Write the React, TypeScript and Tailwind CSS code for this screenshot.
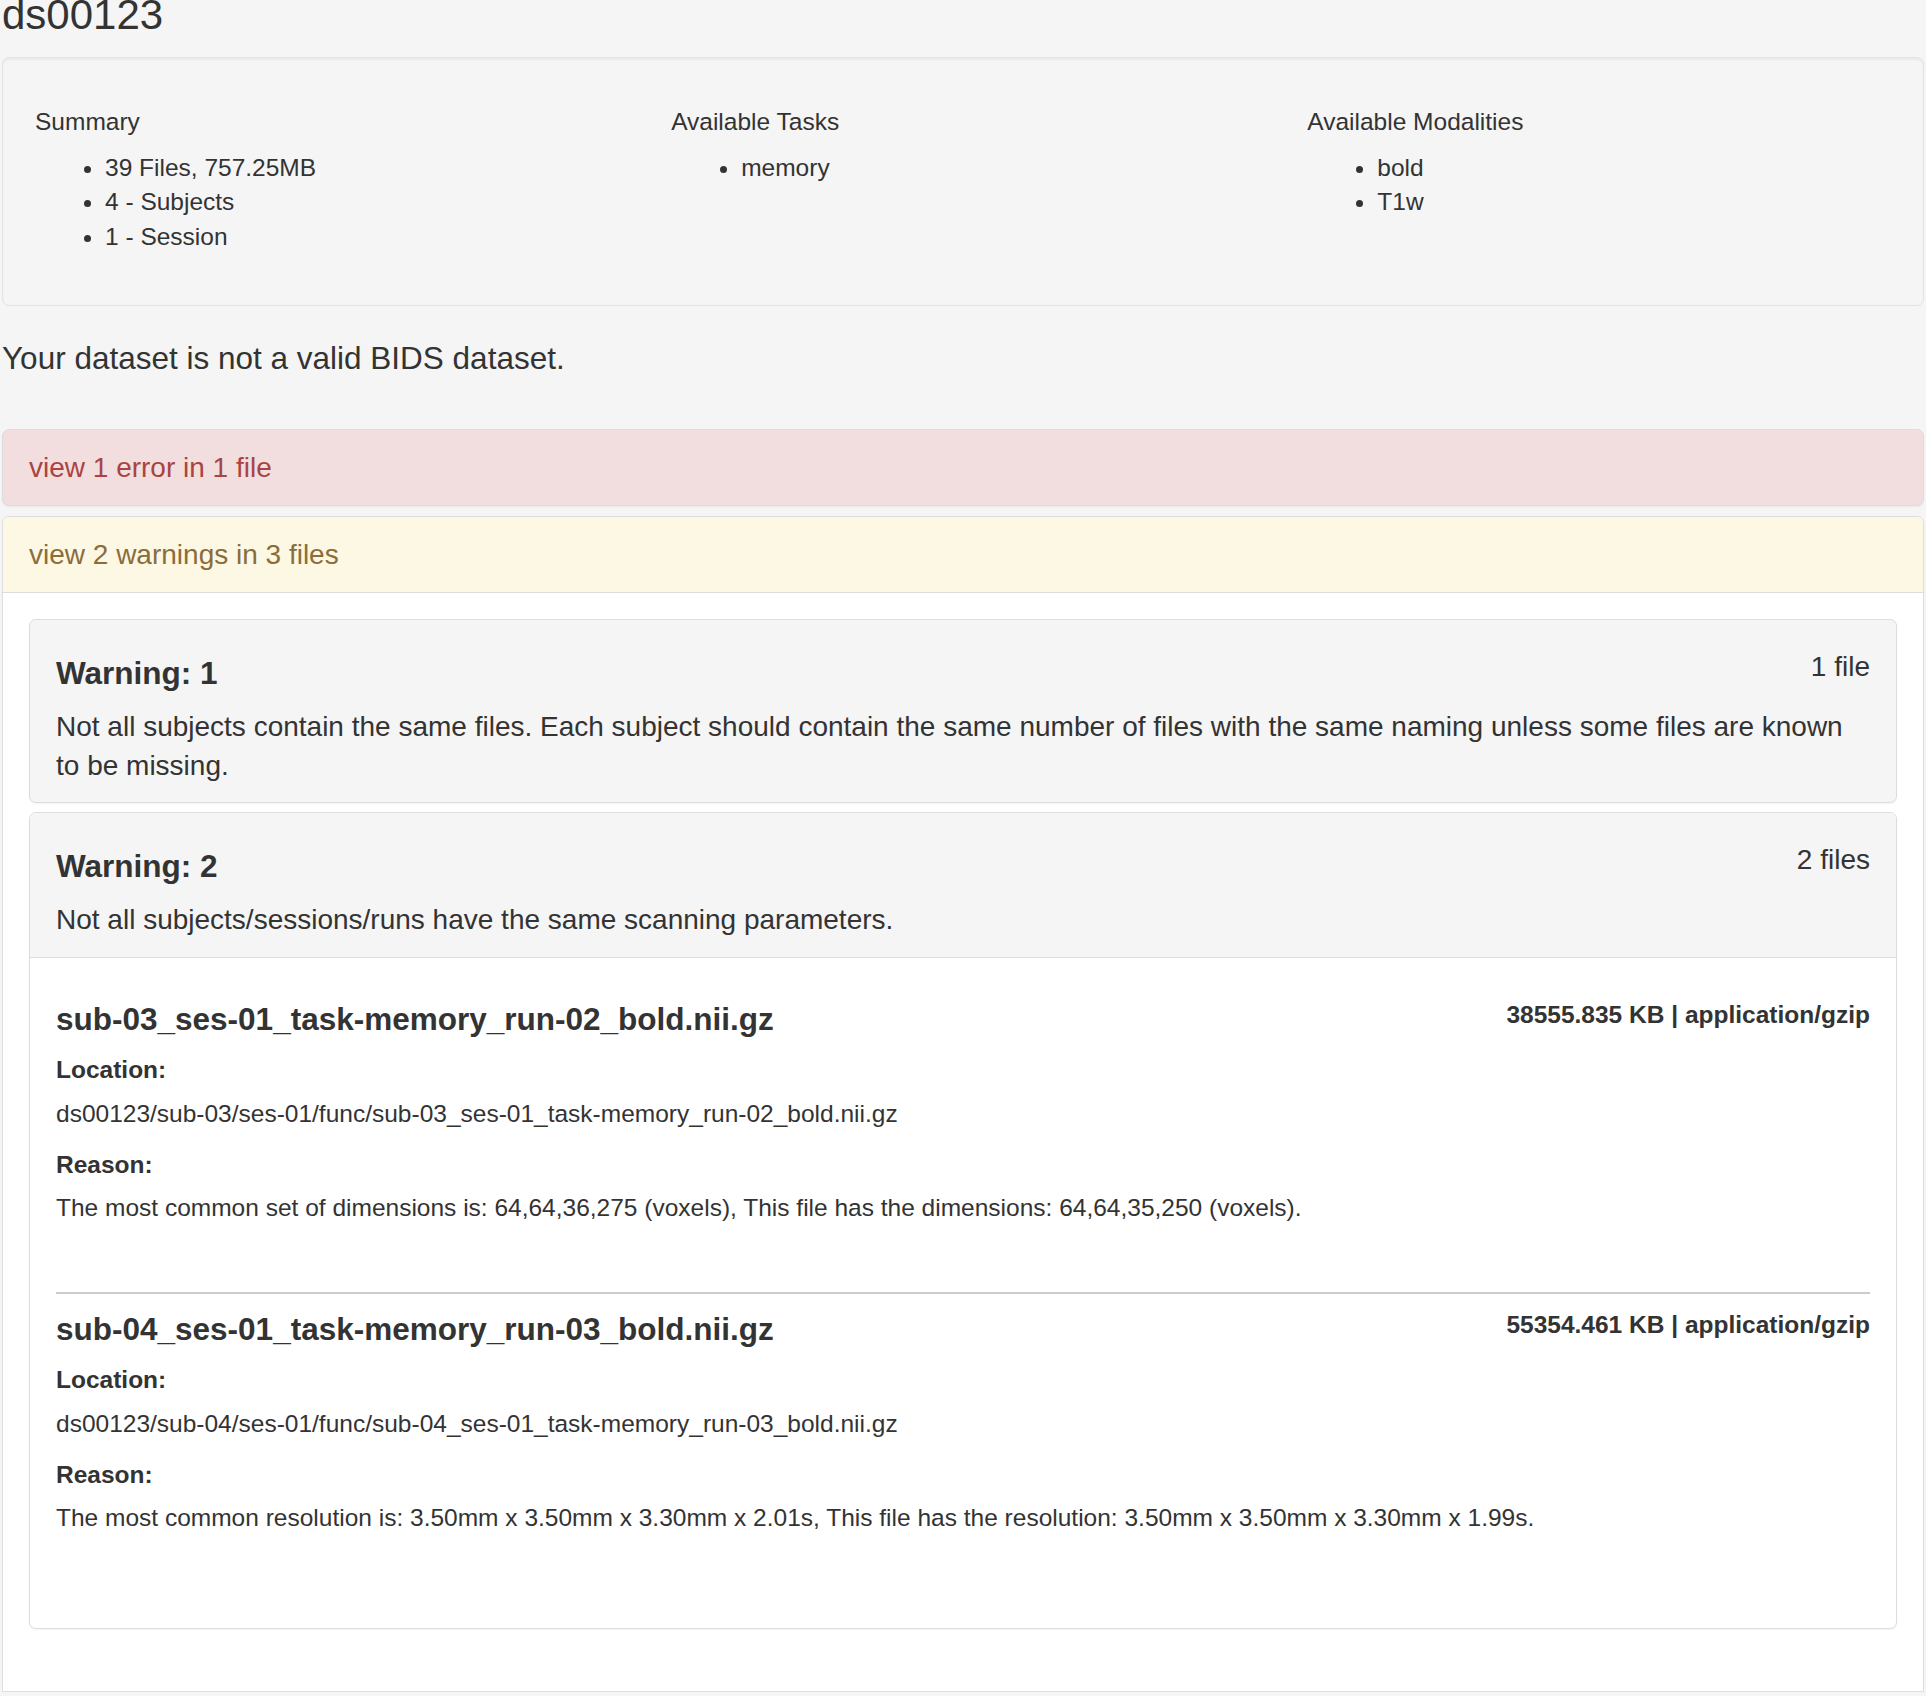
import React from "react"

const summary = ["39 Files, 757.25MB", "4 - Subjects", "1 - Session"]
const tasks = ["memory"]
const modalities = ["bold", "T1w"]

const files = [
  {
    name: "sub-03_ses-01_task-memory_run-02_bold.nii.gz",
    meta: "38555.835 KB | application/gzip",
    location: "ds00123/sub-03/ses-01/func/sub-03_ses-01_task-memory_run-02_bold.nii.gz",
    reason:
      "The most common set of dimensions is: 64,64,36,275 (voxels), This file has the dimensions: 64,64,35,250 (voxels).",
  },
  {
    name: "sub-04_ses-01_task-memory_run-03_bold.nii.gz",
    meta: "55354.461 KB | application/gzip",
    location: "ds00123/sub-04/ses-01/func/sub-04_ses-01_task-memory_run-03_bold.nii.gz",
    reason:
      "The most common resolution is: 3.50mm x 3.50mm x 3.30mm x 2.01s, This file has the resolution: 3.50mm x 3.50mm x 3.30mm x 1.99s.",
  },
]

function SummaryColumn({ title, items }: { title: string; items: string[] }) {
  return (
    <div>
      <h5 className="mt-[17.5px] mb-[15px] text-[24.5px] leading-[1.1]">{title}</h5>
      <ul className="list-disc pl-[70px] mb-[17.5px] text-[24.5px] leading-[34.5px]">
        {items.map((item) => (
          <li key={item}>{item}</li>
        ))}
      </ul>
    </div>
  )
}

function WarningHeading({ title, count, text }: { title: string; count: string; text: string }) {
  return (
    <>
      <div className="flex items-start justify-between mt-[17.5px] mb-[16.5px]">
        <h4 className="text-[31.5px] leading-[1.1] font-bold">{title}</h4>
        <span className="text-[28px] leading-[1.1] -mt-[4px]">{count}</span>
      </div>
      <p className="text-[28px] leading-[39.3px]">{text}</p>
    </>
  )
}

export default function App() {
  return (
    <div className="min-h-screen bg-[#f5f5f5] px-[2px] text-[#333] font-['Liberation_Sans',Arial,Helvetica,sans-serif] overflow-hidden">
      <h2 className="-mt-[8px] mb-[19px] text-[42px] leading-[1.1] font-normal">ds00123</h2>

      <div className="mb-[35.5px] rounded-[7px] border border-[#e3e3e3] bg-[#f5f5f5] px-[32px] pt-[33px] pb-[33px] shadow-[inset_0_2px_2px_rgba(0,0,0,0.05)]">
        <div className="grid grid-cols-3 gap-x-[52.5px]">
          <SummaryColumn title="Summary" items={summary} />
          <SummaryColumn title="Available Tasks" items={tasks} />
          <SummaryColumn title="Available Modalities" items={modalities} />
        </div>
      </div>

      <h4 className="mb-[53px] text-[31.5px] leading-[1.1]">Your dataset is not a valid BIDS dataset.</h4>

      <div className="rounded-[7px] border border-[#ddd] bg-[#f2dede] px-[26px] pt-[18px] pb-[17.5px] text-[28px] leading-[40px] text-[#a94442] shadow-[0_1px_2px_rgba(0,0,0,0.05)]">
        view 1 error in 1 file
      </div>

      <div className="mt-[10px] rounded-t-[7px] border border-[#ddd] bg-white">
        <div className="rounded-t-[6px] border-b border-[#ddd] bg-[#fcf8e3] px-[26px] py-[17.5px] text-[28px] leading-[40px] text-[#8a6d3b]">
          view 2 warnings in 3 files
        </div>

        <div className="px-[26px] pt-[25.5px] pb-[26px]">
          <div className="rounded-[7px] border border-[#ddd] bg-[#f5f5f5] px-[26px] pt-[18.5px] pb-[16px] shadow-[0_1px_2px_rgba(0,0,0,0.05)]">
            <WarningHeading
              title="Warning: 1"
              count="1 file"
              text="Not all subjects contain the same files. Each subject should contain the same number of files with the same naming unless some files are known to be missing."
            />
          </div>

          <div className="mt-[9px] mb-[36px] rounded-[7px] border border-[#ddd] bg-white shadow-[0_1px_2px_rgba(0,0,0,0.05)]">
            <div className="rounded-t-[6px] border-b border-[#ddd] bg-[#f5f5f5] px-[26px] pt-[18.7px] pb-[18px]">
              <WarningHeading
                title="Warning: 2"
                count="2 files"
                text="Not all subjects/sessions/runs have the same scanning parameters."
              />
            </div>

            <div className="p-[26px]">
              {files.map((f, i) => (
                <div key={f.name} className={i > 0 ? "border-t-2 border-[#ccc]" : ""}>
                  <div className="flex items-start justify-between mt-[18px] mb-[15.2px]">
                    <h4 className="text-[31.5px] leading-[1.1] font-bold">{f.name}</h4>
                    <span className="mt-0 text-[24.5px] leading-[1.1] font-bold">{f.meta}</span>
                  </div>
                  <div className="mb-[8.75px] text-[24.5px] leading-[35px] font-bold">Location:</div>
                  <p className="mb-[16.5px] text-[24.5px] leading-[35px]">{f.location}</p>
                  <div className="mb-[7.5px] text-[24.5px] leading-[35px] font-bold">Reason:</div>
                  <p className="pb-[67.5px] text-[24.5px] leading-[35px]">{f.reason}</p>
                </div>
              ))}
            </div>
          </div>
        </div>
      </div>
    </div>
  )
}
